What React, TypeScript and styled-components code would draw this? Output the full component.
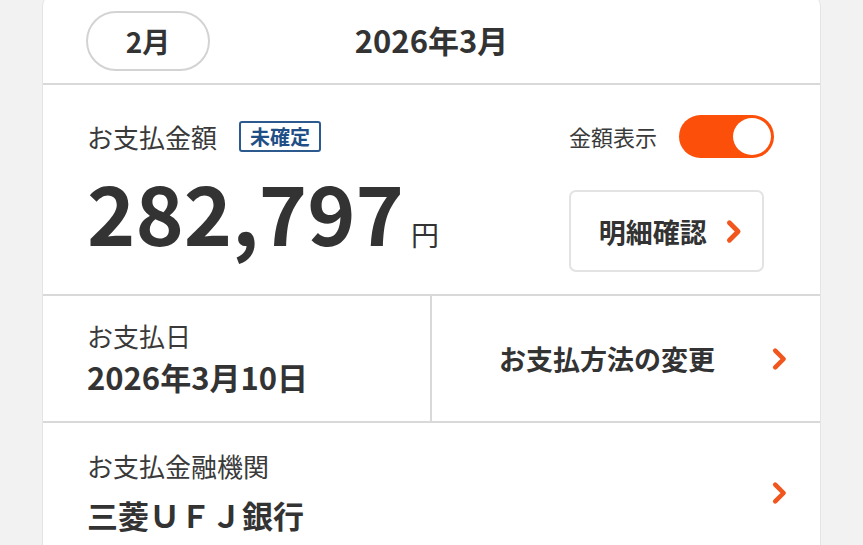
import React, { useState } from "react";
import styled, { createGlobalStyle } from "styled-components";

const GlobalStyle = createGlobalStyle`
  html, body {
    margin: 0;
    padding: 0;
    background: #f2f2f2;
    font-family: "Noto Sans CJK JP", "Noto Sans", sans-serif;
    color: #333;
  }
`;

const Card = styled.div`
  margin: -6px 42px 0;
  background: #fff;
  border: 1px solid #e4e4e4;
  border-radius: 12px;
  overflow: hidden;
`;

const Header = styled.div`
  display: grid;
  grid-template-columns: 1fr auto 1fr;
  align-items: center;
  padding: 16px 43px 12px;
  border-bottom: 2px solid #d9d9d9;
`;

const MonthPill = styled.button`
  width: 124px;
  height: 60px;
  border: 2px solid #d3d3d3;
  border-radius: 30px;
  background: #fff;
  font-family: inherit;
  font-size: 28px;
  font-weight: 700;
  color: #333;
  justify-self: start;
`;

const Title = styled.div`
  font-size: 31px;
  font-weight: 700;
  color: #333;
  margin-top: -4px;
`;

const AmountSection = styled.div`
  display: flex;
  justify-content: space-between;
  padding: 30px 43px 22px 44px;
  border-bottom: 2px solid #d9d9d9;
`;

const Col = styled.div<{ width?: number }>`
  display: flex;
  flex-direction: column;
  width: ${(p) => (p.width ? `${p.width}px` : "auto")};
`;

const LabelRow = styled.div`
  display: flex;
  align-items: center;
  gap: 22px;
  height: 43px;
`;

const Label = styled.div<{ size?: number }>`
  font-size: ${(p) => p.size || 26}px;
  color: #3a3a3a;
  line-height: 1.3;
`;

const Badge = styled.span`
  display: inline-flex;
  align-items: center;
  height: 31px;
  box-sizing: border-box;
  padding: 0 9px;
  border: 2px solid #2c5a8f;
  border-radius: 3px;
  color: #1f4f86;
  font-size: 20px;
  font-weight: 700;
`;

const AmountRow = styled.div`
  display: flex;
  align-items: baseline;
  margin-top: 12px;
`;

const Amount = styled.span`
  font-size: 82px;
  font-weight: 700;
  line-height: 1;
  color: #333;
`;

const Yen = styled.span`
  font-size: 28px;
  margin-left: 7px;
  color: #333;
`;

const ToggleTrack = styled.button<{ on: boolean }>`
  position: relative;
  width: 95px;
  height: 43px;
  border: none;
  border-radius: 22px;
  background: ${(p) => (p.on ? "#fc4f0a" : "#ccc")};
  padding: 0;
`;

const Knob = styled.span<{ on: boolean }>`
  position: absolute;
  top: 3px;
  left: ${(p) => (p.on ? "54px" : "3px")};
  width: 38px;
  height: 37px;
  border-radius: 50%;
  background: #fff;
`;

const DetailButton = styled.button`
  display: flex;
  align-items: center;
  justify-content: center;
  gap: 18px;
  width: 195px;
  height: 82px;
  margin-top: 32px;
  border: 2px solid #e3e3e3;
  border-radius: 7px;
  background: #fff;
  font-family: inherit;
  font-size: 27px;
  font-weight: 700;
  color: #333;
  padding: 0 0 0 8px;
`;

const Row = styled.div`
  display: grid;
  grid-template-columns: 389px 1fr;
  border-bottom: 2px solid #d9d9d9;
`;

const Cell = styled.div`
  display: flex;
  flex-direction: column;
  justify-content: center;
  height: 125px;
  padding-left: 44px;
  border-right: 2px solid #d9d9d9;
`;

const LinkCell = styled.div<{ pl: number }>`
  display: flex;
  align-items: center;
  justify-content: space-between;
  padding: 0 32px 0 ${(p) => p.pl}px;
`;

const Value = styled.div<{ gap?: number }>`
  font-size: 31px;
  font-weight: 700;
  color: #333;
  line-height: 1.4;
  margin-top: ${(p) => p.gap || 0}px;
`;

const LinkText = styled.div`
  font-size: 27px;
  font-weight: 700;
  color: #333;
`;

const BankRow = styled.div`
  display: flex;
  align-items: center;
  justify-content: space-between;
  height: 140px;
  padding: 0 32px 0 44px;
`;

const BankInfo = styled.div`
  display: flex;
  flex-direction: column;
`;

const Chevron = ({ size = 24 }: { size?: number }) => (
  <svg width={size * 0.7} height={size} viewBox="0 0 14 20">
    <polyline
      points="3.5,3 10.5,10 3.5,17"
      fill="none"
      stroke="#f0561d"
      strokeWidth="3.8"
      strokeLinecap="round"
      strokeLinejoin="round"
    />
  </svg>
);

const App = () => {
  const [show, setShow] = useState(true);

  return (
    <>
      <GlobalStyle />
      <Card>
        <Header>
          <MonthPill>2月</MonthPill>
          <Title>2026年3月</Title>
          <div />
        </Header>

        <AmountSection>
          <Col>
            <LabelRow>
              <Label>お支払金額</Label>
              <Badge>未確定</Badge>
            </LabelRow>
            <AmountRow>
              <Amount>{show ? "282,797" : "*****"}</Amount>
              <Yen>円</Yen>
            </AmountRow>
          </Col>
          <Col width={208}>
            <LabelRow>
              <Label size={22}>金額表示</Label>
              <ToggleTrack on={show} onClick={() => setShow(!show)}>
                <Knob on={show} />
              </ToggleTrack>
            </LabelRow>
            <DetailButton>
              明細確認
              <Chevron size={25} />
            </DetailButton>
          </Col>
        </AmountSection>

        <Row>
          <Cell>
            <Label>お支払日</Label>
            <Value gap={2}>2026年3月10日</Value>
          </Cell>
          <LinkCell pl={67}>
            <LinkText>お支払方法の変更</LinkText>
            <Chevron />
          </LinkCell>
        </Row>

        <BankRow>
          <BankInfo>
            <Label>お支払金融機関</Label>
            <Value gap={10}>三菱ＵＦＪ銀行</Value>
          </BankInfo>
          <Chevron />
        </BankRow>
      </Card>
    </>
  );
};

export default App;
